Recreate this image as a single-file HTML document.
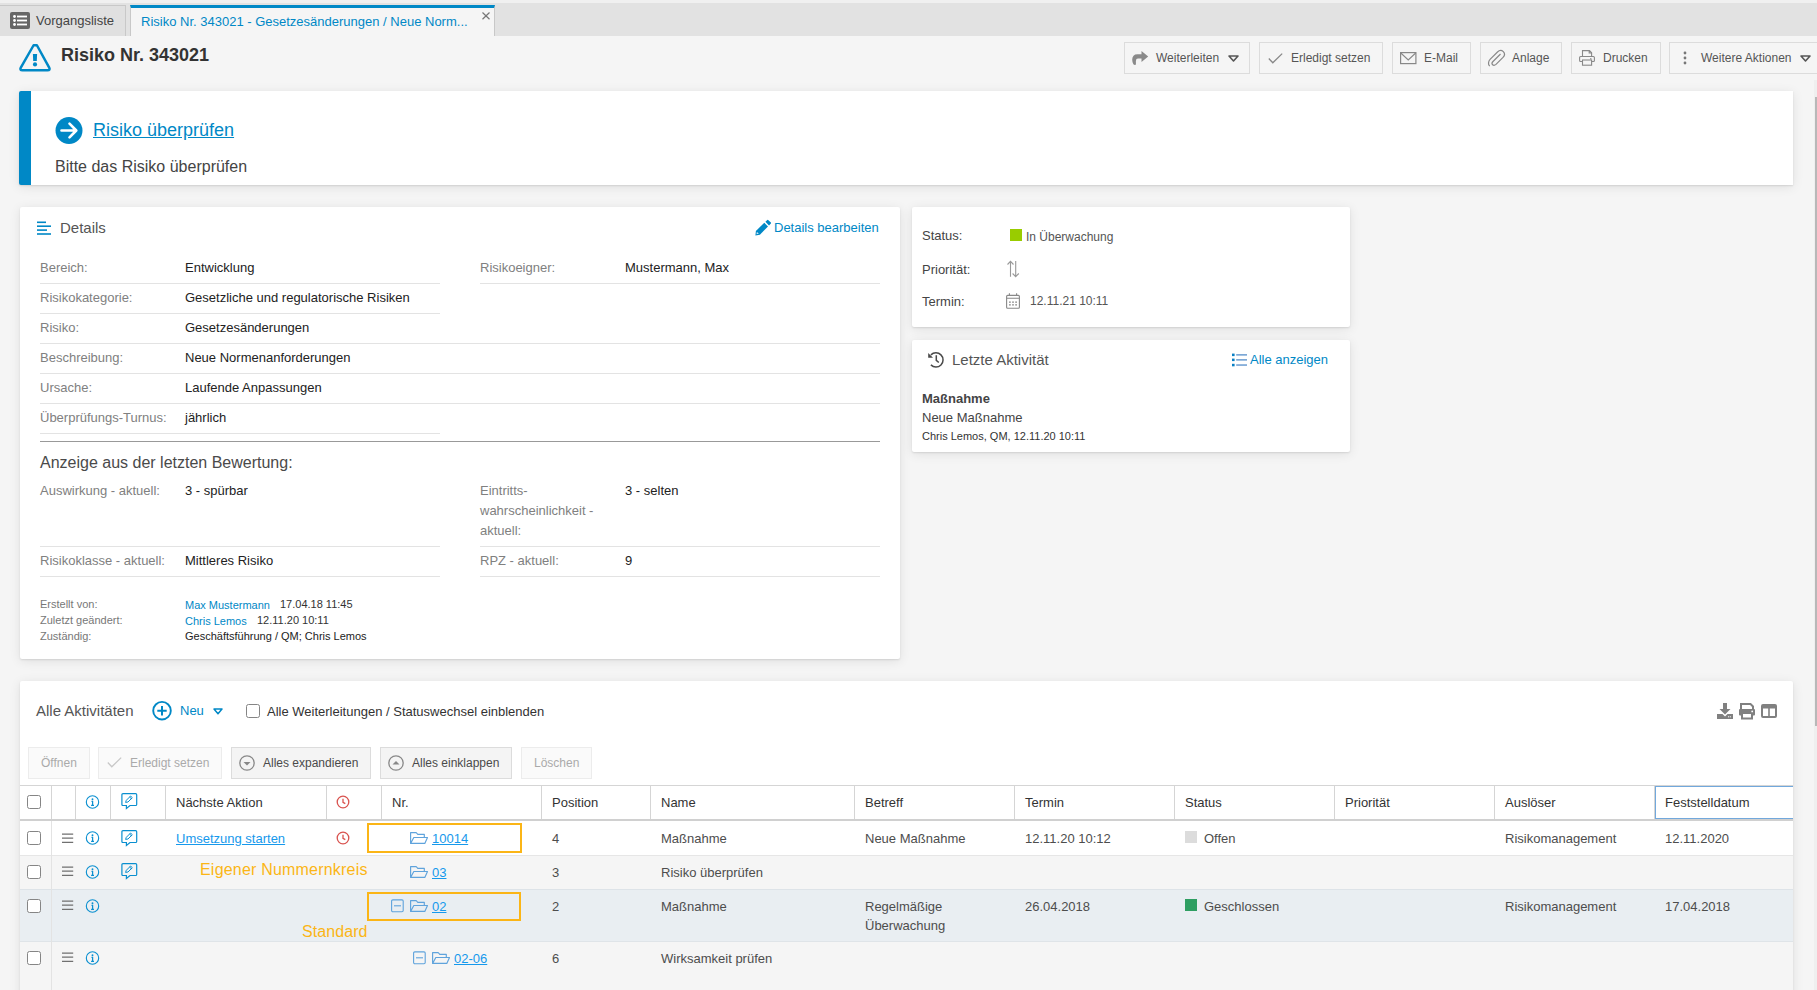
<!DOCTYPE html>
<html><head><meta charset="utf-8">
<style>
*{box-sizing:border-box;margin:0;padding:0}
html,body{width:1817px;height:990px;overflow:hidden;background:#f5f5f5;font-family:"Liberation Sans",sans-serif;color:#333;font-size:13px}
.a{position:absolute}
.t{position:absolute;white-space:nowrap}
.u{text-decoration:underline}
svg{overflow:visible}
</style></head><body>

<div class="a" style="left:0px;top:0px;width:1817px;height:3px;background:#f0f0f0"></div>
<div class="a" style="left:0px;top:3px;width:1817px;height:33px;background:#e2e2e2"></div>
<div class="a" style="left:0px;top:5px;width:126px;height:31px;background:#e0e0e0;border-top:1px solid #c8c8c8;border-right:1px solid #c8c8c8"></div>
<div class="a" style="left:130px;top:5px;width:365px;height:31px;background:#f5f5f5;border-top:3px solid #0088c6;border-left:1px solid #c8c8c8;border-right:1px solid #c8c8c8"></div>
<svg class="a" style="left:10px;top:12px;" width="20" height="17" viewBox="0 0 20 17"><rect x="0" y="0" width="20" height="17" rx="2" fill="#666"/><circle cx="4.5" cy="4.5" r="1.4" fill="#fff"/><circle cx="4.5" cy="8.5" r="1.4" fill="#fff"/><circle cx="4.5" cy="12.5" r="1.4" fill="#fff"/><rect x="7" y="3.6" width="10" height="1.8" fill="#fff"/><rect x="7" y="7.6" width="10" height="1.8" fill="#fff"/><rect x="7" y="11.6" width="10" height="1.8" fill="#fff"/></svg>
<div class="t " style="left:36px;top:14px;font-size:13px;line-height:13px;color:#444;">Vorgangsliste</div>
<div class="t " style="left:141px;top:15px;font-size:13px;line-height:13px;color:#0088c6;">Risiko Nr. 343021 - Gesetzesänderungen / Neue Norm...</div>
<svg class="a" style="left:482px;top:12px;" width="8" height="8" viewBox="0 0 8 8"><path d="M0.5 0.5L7.5 7.2M7.5 0.5L0.5 7.2" stroke="#777" stroke-width="1.2"/></svg>
<svg class="a" style="left:19px;top:43px;" width="33" height="30" viewBox="0 0 33 30"><path d="M14.6 2.25 H17.9 L30.2 24.6 Q31.5 27.35 28.6 27.35 H3.4 Q0.5 27.35 1.8 24.6 Z" fill="none" stroke="#0088c6" stroke-width="2.5" stroke-linejoin="round"/><path d="M13.9 11 H18.1 L17.8 18.1 H14.2 Z" fill="#0088c6"/><circle cx="16" cy="21.4" r="2.1" fill="#0088c6"/></svg>
<div class="t " style="left:61px;top:46px;font-size:18px;line-height:18px;color:#333;font-weight:bold;">Risiko Nr. 343021</div>
<div class="a" style="left:1124px;top:42px;width:126px;height:32px;border:1px solid #dcdcdc;background:#f5f5f5"></div>
<div class="t " style="left:1156px;top:52px;font-size:12px;line-height:12px;color:#555;">Weiterleiten</div>

<svg class="a" style="left:1131px;top:51px;" width="18" height="15" viewBox="0 0 18 15"><path d="M10.5 0 L17.2 5.4 L10.5 10.9 V7.6 H7 Q4.9 7.6 4.9 10 V13.2 Q4.9 14 4 14 Q3 14 2.4 13.2 Q1.2 11.5 1.2 8.8 Q1.2 3.2 6.5 3.2 H10.5 Z" fill="#8a8a8a"/></svg>
<svg class="a" style="left:1228px;top:55px;" width="11" height="7" viewBox="0 0 11 7"><path d="M1 1 L10 1 L5.5 6 Z" fill="none" stroke="#555" stroke-width="1.6" stroke-linejoin="round"/></svg>
<div class="a" style="left:1259px;top:42px;width:124px;height:32px;border:1px solid #dcdcdc;background:#f5f5f5"></div>
<div class="t " style="left:1291px;top:52px;font-size:12px;line-height:12px;color:#555;">Erledigt setzen</div>

<svg class="a" style="left:1268px;top:53px;" width="15" height="11" viewBox="0 0 15 11"><path d="M0.8 5.5 L4.8 9.8 L14.2 0.6" fill="none" stroke="#888" stroke-width="1.3"/></svg>
<div class="a" style="left:1392px;top:42px;width:79px;height:32px;border:1px solid #dcdcdc;background:#f5f5f5"></div>
<div class="t " style="left:1424px;top:52px;font-size:12px;line-height:12px;color:#555;">E-Mail</div>

<svg class="a" style="left:1400px;top:52px;" width="17" height="12" viewBox="0 0 17 12"><rect x="0.6" y="0.6" width="15.3" height="11" fill="none" stroke="#888" stroke-width="1.2"/><path d="M0.8 1 L8.25 8 L15.7 1" fill="none" stroke="#888" stroke-width="1.1"/></svg>
<div class="a" style="left:1480px;top:42px;width:82px;height:32px;border:1px solid #dcdcdc;background:#f5f5f5"></div>
<div class="t " style="left:1512px;top:52px;font-size:12px;line-height:12px;color:#555;">Anlage</div>

<svg class="a" style="left:1488px;top:50px;" width="17" height="17" viewBox="0 0 17 17"><path d="M12.5 4.5 L5 12 C3.8 13.2 3.8 14.5 4.6 15.3 C5.5 16.1 6.8 16 8 14.9 L15 7.9 C16.8 6 16.8 3.6 15.3 2.1 C13.7 0.6 11.3 0.7 9.5 2.5 L2.3 9.7 C0 12 0 15 1.7 16.6" fill="none" stroke="#888" stroke-width="1.2" transform="translate(0,-0.5)"/></svg>
<div class="a" style="left:1571px;top:42px;width:90px;height:32px;border:1px solid #dcdcdc;background:#f5f5f5"></div>
<div class="t " style="left:1603px;top:52px;font-size:12px;line-height:12px;color:#555;">Drucken</div>

<svg class="a" style="left:1579px;top:50px;" width="16" height="16" viewBox="0 0 16 16"><path d="M3.5 6.5 V0.6 H10.5 L12.6 2.7 V6.5 M10.2 0.6 V3 H12.6" fill="none" stroke="#888" stroke-width="1.1"/><rect x="0.6" y="6.5" width="14.8" height="5" rx="1" fill="none" stroke="#888" stroke-width="1.1"/><rect x="3.5" y="10" width="9.1" height="5.2" fill="#f5f5f5" stroke="#888" stroke-width="1.1"/><circle cx="11.8" cy="8.8" r="0.7" fill="#888"/></svg>
<div class="a" style="left:1669px;top:42px;width:160px;height:32px;border:1px solid #dcdcdc;background:#f5f5f5"></div>
<div class="t " style="left:1701px;top:52px;font-size:12px;line-height:12px;color:#555;">Weitere Aktionen</div>

<svg class="a" style="left:1683px;top:51px;" width="4" height="14" viewBox="0 0 4 14"><circle cx="2" cy="2" r="1.4" fill="#777"/><circle cx="2" cy="7" r="1.4" fill="#777"/><circle cx="2" cy="12" r="1.4" fill="#777"/></svg>
<svg class="a" style="left:1800px;top:55px;" width="11" height="7" viewBox="0 0 11 7"><path d="M1 1 L10 1 L5.5 6 Z" fill="none" stroke="#555" stroke-width="1.6" stroke-linejoin="round"/></svg>
<div class="a" style="left:19px;top:91px;width:1774px;height:94px;background:#fff;box-shadow:0 1px 2px rgba(0,0,0,.10),0 2px 12px rgba(0,0,0,.09);border-left:12px solid #0088c6;border-radius:2px 0 0 2px"></div>
<svg class="a" style="left:55px;top:116px;" width="28" height="28" viewBox="0 0 28 28"><circle cx="14" cy="14.5" r="13.5" fill="#0088c6"/><path d="M6.5 14.5 H21 M14.5 7.7 L21.3 14.5 L14.5 21.3" fill="none" stroke="#fff" stroke-width="2.6" stroke-linecap="round" stroke-linejoin="round"/></svg>
<div class="t " style="left:93px;top:121px;font-size:18px;line-height:18px;color:#0088c6;text-decoration:underline;text-underline-offset:1px">Risiko überprüfen</div>
<div class="t " style="left:55px;top:159px;font-size:16px;line-height:16px;color:#444;">Bitte das Risiko überprüfen</div>
<div class="a" style="left:20px;top:207px;width:880px;height:452px;background:#fff;box-shadow:0 1px 2px rgba(0,0,0,.10),0 2px 12px rgba(0,0,0,.09);border-radius:2px"></div>
<div class="a" style="left:912px;top:207px;width:438px;height:120px;background:#fff;box-shadow:0 1px 2px rgba(0,0,0,.10),0 2px 12px rgba(0,0,0,.09);border-radius:2px"></div>
<div class="a" style="left:912px;top:340px;width:438px;height:112px;background:#fff;box-shadow:0 1px 2px rgba(0,0,0,.10),0 2px 12px rgba(0,0,0,.09);border-radius:2px"></div>
<div class="a" style="left:20px;top:681px;width:1773px;height:330px;background:#fff;box-shadow:0 1px 2px rgba(0,0,0,.10),0 2px 12px rgba(0,0,0,.09);border-radius:2px"></div>
<svg class="a" style="left:37px;top:221px;" width="15" height="14" viewBox="0 0 15 14"><rect x="0" y="0.5" width="9" height="1.6" fill="#0088c6"/><rect x="0" y="4.4" width="14" height="1.6" fill="#0088c6"/><rect x="0" y="8.3" width="10" height="1.6" fill="#0088c6"/><rect x="0" y="12.2" width="14" height="1.6" fill="#0088c6"/></svg>
<div class="t " style="left:60px;top:220px;font-size:15px;line-height:15px;color:#555;">Details</div>
<svg class="a" style="left:755px;top:219px;" width="17" height="17" viewBox="0 0 17 17"><path d="M0.4 16.6 L0.9 12 L9.3 3.8 L13 7.4 L4.9 15.8 Z" fill="#0088c6"/><path d="M10.4 2.8 L12.3 0.9 Q12.7 0.5 13.1 0.9 L15.9 3.6 Q16.3 4 15.9 4.4 L14 6.4 Z" fill="#0088c6"/><path d="M1.9 12.9 L3.9 14.6 L1.5 15.3 Z" fill="#fff" opacity="0.85"/></svg>
<div class="t " style="left:774px;top:221px;font-size:13px;line-height:13px;color:#0088c6;">Details bearbeiten</div>
<div class="t " style="left:40px;top:261px;font-size:13px;line-height:13px;color:#808080;">Bereich:</div>
<div class="t " style="left:185px;top:261px;font-size:13px;line-height:13px;color:#222;">Entwicklung</div>
<div class="a" style="left:40px;top:283px;width:400px;height:1px;background:#e3e3e3"></div>
<div class="t " style="left:40px;top:291px;font-size:13px;line-height:13px;color:#808080;">Risikokategorie:</div>
<div class="t " style="left:185px;top:291px;font-size:13px;line-height:13px;color:#222;">Gesetzliche und regulatorische Risiken</div>
<div class="a" style="left:40px;top:313px;width:400px;height:1px;background:#e3e3e3"></div>
<div class="t " style="left:40px;top:321px;font-size:13px;line-height:13px;color:#808080;">Risiko:</div>
<div class="t " style="left:185px;top:321px;font-size:13px;line-height:13px;color:#222;">Gesetzesänderungen</div>
<div class="a" style="left:40px;top:343px;width:400px;height:1px;background:#e3e3e3"></div>
<div class="t " style="left:40px;top:351px;font-size:13px;line-height:13px;color:#808080;">Beschreibung:</div>
<div class="t " style="left:185px;top:351px;font-size:13px;line-height:13px;color:#222;">Neue Normenanforderungen</div>
<div class="a" style="left:40px;top:373px;width:400px;height:1px;background:#e3e3e3"></div>
<div class="t " style="left:40px;top:381px;font-size:13px;line-height:13px;color:#808080;">Ursache:</div>
<div class="t " style="left:185px;top:381px;font-size:13px;line-height:13px;color:#222;">Laufende Anpassungen</div>
<div class="a" style="left:40px;top:403px;width:400px;height:1px;background:#e3e3e3"></div>
<div class="t " style="left:40px;top:411px;font-size:13px;line-height:13px;color:#808080;">Überprüfungs-Turnus:</div>
<div class="t " style="left:185px;top:411px;font-size:13px;line-height:13px;color:#222;">jährlich</div>
<div class="a" style="left:40px;top:433px;width:400px;height:1px;background:#e3e3e3"></div>
<div class="t " style="left:480px;top:261px;font-size:13px;line-height:13px;color:#808080;">Risikoeigner:</div>
<div class="t " style="left:625px;top:261px;font-size:13px;line-height:13px;color:#222;">Mustermann, Max</div>
<div class="a" style="left:480px;top:283px;width:400px;height:1px;background:#e3e3e3"></div>
<div class="a" style="left:440px;top:343px;width:40px;height:1px;background:#e3e3e3"></div>
<div class="a" style="left:480px;top:343px;width:400px;height:1px;background:#e3e3e3"></div>
<div class="a" style="left:440px;top:373px;width:40px;height:1px;background:#e3e3e3"></div>
<div class="a" style="left:480px;top:373px;width:400px;height:1px;background:#e3e3e3"></div>
<div class="a" style="left:440px;top:403px;width:40px;height:1px;background:#e3e3e3"></div>
<div class="a" style="left:480px;top:403px;width:400px;height:1px;background:#e3e3e3"></div>
<div class="a" style="left:40px;top:441px;width:840px;height:1px;background:#999"></div>
<div class="t " style="left:40px;top:455px;font-size:16px;line-height:16px;color:#4a4a4a;">Anzeige aus der letzten Bewertung:</div>
<div class="t " style="left:40px;top:484px;font-size:13px;line-height:13px;color:#808080;">Auswirkung - aktuell:</div>
<div class="t " style="left:185px;top:484px;font-size:13px;line-height:13px;color:#222;">3 - spürbar</div>
<div class="t " style="left:480px;top:484px;font-size:13px;line-height:13px;color:#808080;">Eintritts-</div>
<div class="t " style="left:480px;top:504px;font-size:13px;line-height:13px;color:#808080;">wahrscheinlichkeit -</div>
<div class="t " style="left:480px;top:524px;font-size:13px;line-height:13px;color:#808080;">aktuell:</div>
<div class="t " style="left:625px;top:484px;font-size:13px;line-height:13px;color:#222;">3 - selten</div>
<div class="a" style="left:40px;top:546px;width:400px;height:1px;background:#e3e3e3"></div>
<div class="a" style="left:480px;top:546px;width:400px;height:1px;background:#e3e3e3"></div>
<div class="t " style="left:40px;top:554px;font-size:13px;line-height:13px;color:#808080;">Risikoklasse - aktuell:</div>
<div class="t " style="left:185px;top:554px;font-size:13px;line-height:13px;color:#222;">Mittleres Risiko</div>
<div class="t " style="left:480px;top:554px;font-size:13px;line-height:13px;color:#808080;">RPZ - aktuell:</div>
<div class="t " style="left:625px;top:554px;font-size:13px;line-height:13px;color:#222;">9</div>
<div class="a" style="left:40px;top:576px;width:400px;height:1px;background:#e3e3e3"></div>
<div class="a" style="left:480px;top:576px;width:400px;height:1px;background:#e3e3e3"></div>
<div class="t " style="left:40px;top:599px;font-size:11px;line-height:11px;color:#777;">Erstellt von:</div>
<div class="t " style="left:185px;top:600px;font-size:11px;line-height:11px;color:#0088c6;">Max Mustermann</div>
<div class="t " style="left:280px;top:599px;font-size:11px;line-height:11px;color:#333;">17.04.18 11:45</div>
<div class="t " style="left:40px;top:615px;font-size:11px;line-height:11px;color:#777;">Zuletzt geändert:</div>
<div class="t " style="left:185px;top:616px;font-size:11px;line-height:11px;color:#0088c6;">Chris Lemos</div>
<div class="t " style="left:257px;top:615px;font-size:11px;line-height:11px;color:#333;">12.11.20 10:11</div>
<div class="t " style="left:40px;top:631px;font-size:11px;line-height:11px;color:#777;">Zuständig:</div>
<div class="t " style="left:185px;top:631px;font-size:11px;line-height:11px;color:#222;">Geschäftsführung / QM; Chris Lemos</div>
<div class="t " style="left:922px;top:229px;font-size:13px;line-height:13px;color:#444;">Status:</div>
<div class="a" style="left:1010px;top:229px;width:12px;height:12px;background:#99cc00"></div>
<div class="t " style="left:1026px;top:231px;font-size:12px;line-height:12px;color:#555;">In Überwachung</div>
<div class="t " style="left:922px;top:263px;font-size:13px;line-height:13px;color:#444;">Priorität:</div>
<svg class="a" style="left:1006px;top:260px;" width="14" height="18" viewBox="0 0 14 18"><path d="M4.5 16.8 V1.3 M1.5 4.5 L4.5 1.3 L7.5 4.5 M9.7 1 V16.6 M6.6 13.5 L9.7 16.6 L12.8 13.5" fill="none" stroke="#999" stroke-width="1.1"/></svg>
<div class="t " style="left:922px;top:295px;font-size:13px;line-height:13px;color:#444;">Termin:</div>
<svg class="a" style="left:1006px;top:293px;" width="14" height="16" viewBox="0 0 14 16"><rect x="0.6" y="2.4" width="12.8" height="12.9" rx="1" fill="none" stroke="#888" stroke-width="1.1"/><path d="M0.6 5.2 H13.4 M3.4 0.2 V3 M10.6 0.2 V3" stroke="#888" stroke-width="1.1"/><path d="M3 9.2h1.8M6.1 9.2h1.8M9.2 9.2h1.8M3 11.8h1.8M6.1 11.8h1.8M9.2 11.8h1.8" stroke="#888" stroke-width="1.2"/></svg>
<div class="t " style="left:1030px;top:295px;font-size:12px;line-height:12px;color:#555;">12.11.21 10:11</div>
<svg class="a" style="left:927px;top:351px;" width="18" height="18" viewBox="0 0 18 18"><path d="M3.9 3.9 A7.1 7.1 0 1 1 3.9 13.9" fill="none" stroke="#4a4a4a" stroke-width="1.5"/><path d="M1.2 2 L1.2 6.8 L6 6.8 Z" fill="#4a4a4a"/><path d="M9.3 4.3 V9.3 L11.8 11.5" fill="none" stroke="#4a4a4a" stroke-width="1.5"/></svg>
<div class="t " style="left:952px;top:352px;font-size:15px;line-height:15px;color:#555;">Letzte Aktivität</div>
<svg class="a" style="left:1231px;top:352px;" width="17" height="15" viewBox="0 0 17 15"><rect x="1" y="1.6" width="2.6" height="2.5" fill="#0a80c4"/><rect x="1" y="6.6" width="2.6" height="2.5" fill="#0a80c4"/><rect x="1" y="11.8" width="2.6" height="2.5" fill="#0a80c4"/><rect x="5.2" y="2" width="10.8" height="1.7" fill="#7da8d6"/><rect x="5.2" y="7" width="10.8" height="1.7" fill="#7da8d6"/><rect x="5.2" y="12.2" width="10.8" height="1.7" fill="#7da8d6"/></svg>
<div class="t " style="left:1250px;top:353px;font-size:13px;line-height:13px;color:#0088c6;">Alle anzeigen</div>
<div class="t " style="left:922px;top:392px;font-size:13px;line-height:13px;color:#444;font-weight:bold;">Maßnahme</div>
<div class="t " style="left:922px;top:411px;font-size:13px;line-height:13px;color:#444;">Neue Maßnahme</div>
<div class="t " style="left:922px;top:431px;font-size:11px;line-height:11px;color:#333;">Chris Lemos, QM, 12.11.20 10:11</div>
<div class="t " style="left:36px;top:703px;font-size:15px;line-height:15px;color:#555;">Alle Aktivitäten</div>
<svg class="a" style="left:152px;top:701px;" width="20" height="20" viewBox="0 0 20 20"><circle cx="10" cy="9.7" r="8.8" fill="none" stroke="#0088c6" stroke-width="1.9"/><path d="M10 5 V14.5 M5.3 9.7 H14.7" stroke="#0088c6" stroke-width="2"/></svg>
<div class="t " style="left:180px;top:704px;font-size:13px;line-height:13px;color:#0088c6;">Neu</div>
<svg class="a" style="left:213px;top:708px;" width="10" height="7" viewBox="0 0 10 7"><path d="M1 1 L9 1 L5 5.8 Z" fill="none" stroke="#0088c6" stroke-width="1.5" stroke-linejoin="round"/></svg>
<div class="a" style="left:246px;top:704px;width:14px;height:14px;border:1px solid #858585;border-radius:2.5px;background:#fff"></div>
<div class="t " style="left:267px;top:705px;font-size:13px;line-height:13px;color:#333;">Alle Weiterleitungen / Statuswechsel einblenden</div>
<svg class="a" style="left:1717px;top:703px;" width="16" height="16" viewBox="0 0 16 16"><rect x="6" y="0" width="4" height="7" fill="#808080"/><path d="M2.5 6 H13.5 L8 11.5 Z" fill="#808080"/><path d="M0 11 H5.5 L8 13.5 L10.5 11 H16 V16 H0 Z" fill="#808080"/><rect x="11" y="13.3" width="1.1" height="1" fill="#fff"/><rect x="12.8" y="13.3" width="1.1" height="1" fill="#fff"/></svg>
<svg class="a" style="left:1739px;top:703px;" width="16" height="16" viewBox="0 0 16 16"><path d="M2 6 V1 H11.5 L14 3.5 V6" fill="none" stroke="#808080" stroke-width="2"/><rect x="0" y="6" width="16" height="6.5" rx="1" fill="#808080"/><rect x="3" y="10" width="10" height="5.5" fill="#fff" stroke="#808080" stroke-width="2"/><circle cx="13.2" cy="8.4" r="0.9" fill="#fff"/></svg>
<svg class="a" style="left:1761px;top:704px;" width="16" height="14" viewBox="0 0 16 14"><rect x="1" y="1" width="14" height="12" rx="1" fill="none" stroke="#808080" stroke-width="2"/><rect x="1" y="1" width="14" height="3.5" fill="#808080"/><rect x="7.2" y="1" width="1.6" height="12" fill="#808080"/></svg>
<div class="a" style="left:28px;top:747px;width:62px;height:32px;border:1px solid #ececec;background:#fafafa"></div>
<div class="t " style="left:41px;top:757px;font-size:12px;line-height:12px;color:#aaa;">Öffnen</div>
<div class="a" style="left:98px;top:747px;width:124px;height:32px;border:1px solid #ececec;background:#fafafa"></div>
<div class="t " style="left:130px;top:757px;font-size:12px;line-height:12px;color:#aaa;">Erledigt setzen</div>
<svg class="a" style="left:107px;top:757px" width="15" height="11"><path d="M0.8 5.5 L4.8 9.8 L14.2 0.6" fill="none" stroke="#c8c8c8" stroke-width="1.3"/></svg>
<div class="a" style="left:231px;top:747px;width:140px;height:32px;border:1px solid #dcdcdc;background:#f4f4f4"></div>
<div class="t " style="left:263px;top:757px;font-size:12px;line-height:12px;color:#4a4a4a;">Alles expandieren</div>
<svg class="a" style="left:239px;top:755px" width="16" height="16"><circle cx="8" cy="8" r="7.2" fill="none" stroke="#888" stroke-width="1.3"/><path d="M4.5 7 H11.5 L8 10.5 Z" fill="#888"/></svg>
<div class="a" style="left:380px;top:747px;width:132px;height:32px;border:1px solid #dcdcdc;background:#f4f4f4"></div>
<div class="t " style="left:412px;top:757px;font-size:12px;line-height:12px;color:#4a4a4a;">Alles einklappen</div>
<svg class="a" style="left:388px;top:755px" width="16" height="16"><circle cx="8" cy="8" r="7.2" fill="none" stroke="#888" stroke-width="1.3"/><path d="M4.5 9.5 H11.5 L8 6 Z" fill="#888"/></svg>
<div class="a" style="left:521px;top:747px;width:71px;height:32px;border:1px solid #ececec;background:#fafafa"></div>
<div class="t " style="left:534px;top:757px;font-size:12px;line-height:12px;color:#aaa;">Löschen</div>
<div class="a" style="left:20px;top:785px;width:1773px;height:1px;background:#d5d5d5"></div>
<div class="a" style="left:20px;top:819px;width:1773px;height:2px;background:#d0d0d0"></div>
<div class="a" style="left:51px;top:786px;width:1px;height:33px;background:#d5d5d5"></div>
<div class="a" style="left:75px;top:786px;width:1px;height:33px;background:#d5d5d5"></div>
<div class="a" style="left:110px;top:786px;width:1px;height:33px;background:#d5d5d5"></div>
<div class="a" style="left:165px;top:786px;width:1px;height:33px;background:#d5d5d5"></div>
<div class="a" style="left:326px;top:786px;width:1px;height:33px;background:#d5d5d5"></div>
<div class="a" style="left:381px;top:786px;width:1px;height:33px;background:#d5d5d5"></div>
<div class="a" style="left:541px;top:786px;width:1px;height:33px;background:#d5d5d5"></div>
<div class="a" style="left:650px;top:786px;width:1px;height:33px;background:#d5d5d5"></div>
<div class="a" style="left:854px;top:786px;width:1px;height:33px;background:#d5d5d5"></div>
<div class="a" style="left:1014px;top:786px;width:1px;height:33px;background:#d5d5d5"></div>
<div class="a" style="left:1174px;top:786px;width:1px;height:33px;background:#d5d5d5"></div>
<div class="a" style="left:1334px;top:786px;width:1px;height:33px;background:#d5d5d5"></div>
<div class="a" style="left:1494px;top:786px;width:1px;height:33px;background:#d5d5d5"></div>
<div class="a" style="left:1654px;top:786px;width:1px;height:33px;background:#d5d5d5"></div>
<div class="a" style="left:1655px;top:786px;width:138px;height:33px;border:1px solid #72a8dc;border-right:none"></div>
<div class="a" style="left:27px;top:795px;width:14px;height:14px;border:1px solid #858585;border-radius:2.5px;background:#fff"></div>
<svg class="a" style="left:84px;top:794px" width="16" height="16"><circle cx="8.5" cy="8" r="6.2" fill="none" stroke="#0a8fd0" stroke-width="1.1"/><circle cx="8.5" cy="5.2" r="0.95" fill="#0a8fd0"/><path d="M7.5 7.3 H8.6 V11.2 M7.1 11.4 H10" fill="none" stroke="#0a8fd0" stroke-width="1.25"/></svg>
<svg class="a" style="left:121px;top:793px" width="17" height="17"><path d="M2 0.7 H14.6 Q15.7 0.7 15.7 1.8 V11.4 Q15.7 12.5 14.6 12.5 H9 L5.4 15.5 V12.5 H2 Q0.9 12.5 0.9 11.4 V1.8 Q0.9 0.7 2 0.7 Z" fill="none" stroke="#0a8fd0" stroke-width="1.2"/><path d="M4.6 9.4 L5.3 7.3 L9.6 3 L11.3 4.7 L7 9 Z M8.6 4 L10.3 5.7" fill="none" stroke="#0a8fd0" stroke-width="1" stroke-linejoin="round"/></svg>
<div class="t " style="left:176px;top:796px;font-size:13px;line-height:13px;color:#333;">Nächste Aktion</div>
<svg class="a" style="left:336px;top:795px" width="14" height="14"><circle cx="7" cy="7" r="5.8" fill="none" stroke="#d9534f" stroke-width="1.3"/><path d="M7 3.8 V7.3 L9.3 8.6" fill="none" stroke="#d9534f" stroke-width="1.3"/></svg>
<div class="t " style="left:392px;top:796px;font-size:13px;line-height:13px;color:#333;">Nr.</div>
<div class="t " style="left:552px;top:796px;font-size:13px;line-height:13px;color:#333;">Position</div>
<div class="t " style="left:661px;top:796px;font-size:13px;line-height:13px;color:#333;">Name</div>
<div class="t " style="left:865px;top:796px;font-size:13px;line-height:13px;color:#333;">Betreff</div>
<div class="t " style="left:1025px;top:796px;font-size:13px;line-height:13px;color:#333;">Termin</div>
<div class="t " style="left:1185px;top:796px;font-size:13px;line-height:13px;color:#333;">Status</div>
<div class="t " style="left:1345px;top:796px;font-size:13px;line-height:13px;color:#333;">Priorität</div>
<div class="t " style="left:1505px;top:796px;font-size:13px;line-height:13px;color:#333;">Auslöser</div>
<div class="t " style="left:1665px;top:796px;font-size:13px;line-height:13px;color:#333;">Feststelldatum</div>
<div class="a" style="left:20px;top:821px;width:1773px;height:34px;background:#fff"></div>
<div class="a" style="left:20px;top:855px;width:1773px;height:1px;background:#e6e6e6"></div>
<div class="a" style="left:20px;top:856px;width:1773px;height:33px;background:#f5f5f5"></div>
<div class="a" style="left:20px;top:889px;width:1773px;height:1px;background:#dde3e8"></div>
<div class="a" style="left:20px;top:890px;width:1773px;height:51px;background:#e9eef2"></div>
<div class="a" style="left:20px;top:941px;width:1773px;height:1px;background:#dfe4e8"></div>
<div class="a" style="left:20px;top:942px;width:1773px;height:60px;background:#f5f5f5"></div>
<div class="a" style="left:51px;top:821px;width:1px;height:170px;background:#e3e3e3"></div>
<div class="a" style="left:27px;top:831px;width:14px;height:14px;border:1px solid #858585;border-radius:2.5px;background:#fff"></div>
<svg class="a" style="left:62px;top:833px" width="12" height="12"><path d="M0 1.2 H11.2 M0 5.2 H11.2 M0 9.3 H11.2" stroke="#707070" stroke-width="1.3"/></svg>
<svg class="a" style="left:84px;top:830px" width="16" height="16"><circle cx="8.5" cy="8" r="6.2" fill="none" stroke="#0a8fd0" stroke-width="1.1"/><circle cx="8.5" cy="5.2" r="0.95" fill="#0a8fd0"/><path d="M7.5 7.3 H8.6 V11.2 M7.1 11.4 H10" fill="none" stroke="#0a8fd0" stroke-width="1.25"/></svg>
<svg class="a" style="left:121px;top:830px" width="17" height="17"><path d="M2 0.7 H14.6 Q15.7 0.7 15.7 1.8 V11.4 Q15.7 12.5 14.6 12.5 H9 L5.4 15.5 V12.5 H2 Q0.9 12.5 0.9 11.4 V1.8 Q0.9 0.7 2 0.7 Z" fill="none" stroke="#0a8fd0" stroke-width="1.2"/><path d="M4.6 9.4 L5.3 7.3 L9.6 3 L11.3 4.7 L7 9 Z M8.6 4 L10.3 5.7" fill="none" stroke="#0a8fd0" stroke-width="1" stroke-linejoin="round"/></svg>
<div class="t " style="left:176px;top:832px;font-size:13px;line-height:13px;color:#1699ec;text-decoration:underline">Umsetzung starten</div>
<svg class="a" style="left:336px;top:831px" width="14" height="14"><circle cx="7" cy="7" r="5.8" fill="none" stroke="#d9534f" stroke-width="1.3"/><path d="M7 3.8 V7.3 L9.3 8.6" fill="none" stroke="#d9534f" stroke-width="1.3"/></svg>
<svg class="a" style="left:409px;top:831px" width="20" height="14"><path d="M1.6 12.4 V1.6 H7.2 L8.8 3.3 H15.3 V6.3 M1.6 12.4 L4.8 6.5 H18.5 L15.8 12.4 Z" fill="none" stroke="#5fa3dc" stroke-width="1.15" stroke-linejoin="round"/></svg>
<div class="t " style="left:432px;top:832px;font-size:13px;line-height:13px;color:#1699ec;text-decoration:underline">10014</div>
<div class="t " style="left:552px;top:832px;font-size:13px;line-height:13px;color:#4d4d4d;">4</div>
<div class="t " style="left:661px;top:832px;font-size:13px;line-height:13px;color:#4d4d4d;">Maßnahme</div>
<div class="t " style="left:865px;top:832px;font-size:13px;line-height:13px;color:#4d4d4d;">Neue Maßnahme</div>
<div class="t " style="left:1025px;top:832px;font-size:13px;line-height:13px;color:#4d4d4d;">12.11.20 10:12</div>
<div class="a" style="left:1185px;top:831px;width:12px;height:12px;background:#dcdcdc"></div>
<div class="t " style="left:1204px;top:832px;font-size:13px;line-height:13px;color:#4d4d4d;">Offen</div>
<div class="t " style="left:1505px;top:832px;font-size:13px;line-height:13px;color:#4d4d4d;">Risikomanagement</div>
<div class="t " style="left:1665px;top:832px;font-size:13px;line-height:13px;color:#4d4d4d;">12.11.2020</div>
<div class="a" style="left:27px;top:865px;width:14px;height:14px;border:1px solid #858585;border-radius:2.5px;background:#fff"></div>
<svg class="a" style="left:62px;top:866px" width="12" height="12"><path d="M0 1.2 H11.2 M0 5.2 H11.2 M0 9.3 H11.2" stroke="#707070" stroke-width="1.3"/></svg>
<svg class="a" style="left:84px;top:864px" width="16" height="16"><circle cx="8.5" cy="8" r="6.2" fill="none" stroke="#0a8fd0" stroke-width="1.1"/><circle cx="8.5" cy="5.2" r="0.95" fill="#0a8fd0"/><path d="M7.5 7.3 H8.6 V11.2 M7.1 11.4 H10" fill="none" stroke="#0a8fd0" stroke-width="1.25"/></svg>
<svg class="a" style="left:121px;top:863px" width="17" height="17"><path d="M2 0.7 H14.6 Q15.7 0.7 15.7 1.8 V11.4 Q15.7 12.5 14.6 12.5 H9 L5.4 15.5 V12.5 H2 Q0.9 12.5 0.9 11.4 V1.8 Q0.9 0.7 2 0.7 Z" fill="none" stroke="#0a8fd0" stroke-width="1.2"/><path d="M4.6 9.4 L5.3 7.3 L9.6 3 L11.3 4.7 L7 9 Z M8.6 4 L10.3 5.7" fill="none" stroke="#0a8fd0" stroke-width="1" stroke-linejoin="round"/></svg>
<svg class="a" style="left:409px;top:865px" width="20" height="14"><path d="M1.6 12.4 V1.6 H7.2 L8.8 3.3 H15.3 V6.3 M1.6 12.4 L4.8 6.5 H18.5 L15.8 12.4 Z" fill="none" stroke="#5fa3dc" stroke-width="1.15" stroke-linejoin="round"/></svg>
<div class="t " style="left:432px;top:866px;font-size:13px;line-height:13px;color:#1699ec;text-decoration:underline">03</div>
<div class="t " style="left:552px;top:866px;font-size:13px;line-height:13px;color:#4d4d4d;">3</div>
<div class="t " style="left:661px;top:866px;font-size:13px;line-height:13px;color:#4d4d4d;">Risiko überprüfen</div>
<div class="a" style="left:27px;top:899px;width:14px;height:14px;border:1px solid #858585;border-radius:2.5px;background:#fff"></div>
<svg class="a" style="left:62px;top:900px" width="12" height="12"><path d="M0 1.2 H11.2 M0 5.2 H11.2 M0 9.3 H11.2" stroke="#707070" stroke-width="1.3"/></svg>
<svg class="a" style="left:84px;top:898px" width="16" height="16"><circle cx="8.5" cy="8" r="6.2" fill="none" stroke="#0a8fd0" stroke-width="1.1"/><circle cx="8.5" cy="5.2" r="0.95" fill="#0a8fd0"/><path d="M7.5 7.3 H8.6 V11.2 M7.1 11.4 H10" fill="none" stroke="#0a8fd0" stroke-width="1.25"/></svg>
<svg class="a" style="left:390px;top:899px" width="14" height="14"><rect x="1.6" y="0.9" width="11.6" height="11.8" rx="1.2" fill="none" stroke="#5fa3dc" stroke-width="1.1"/><path d="M4 6.8 H11" stroke="#5fa3dc" stroke-width="1.1"/></svg>
<svg class="a" style="left:409px;top:899px" width="20" height="14"><path d="M1.6 12.4 V1.6 H7.2 L8.8 3.3 H15.3 V6.3 M1.6 12.4 L4.8 6.5 H18.5 L15.8 12.4 Z" fill="none" stroke="#5fa3dc" stroke-width="1.15" stroke-linejoin="round"/></svg>
<div class="t " style="left:432px;top:900px;font-size:13px;line-height:13px;color:#1699ec;text-decoration:underline">02</div>
<div class="t " style="left:552px;top:900px;font-size:13px;line-height:13px;color:#4d4d4d;">2</div>
<div class="t " style="left:661px;top:900px;font-size:13px;line-height:13px;color:#4d4d4d;">Maßnahme</div>
<div class="t " style="left:865px;top:900px;font-size:13px;line-height:13px;color:#4d4d4d;">Regelmäßige</div>
<div class="t " style="left:865px;top:919px;font-size:13px;line-height:13px;color:#4d4d4d;">Überwachung</div>
<div class="t " style="left:1025px;top:900px;font-size:13px;line-height:13px;color:#4d4d4d;">26.04.2018</div>
<div class="a" style="left:1185px;top:899px;width:12px;height:12px;background:#2e9e62"></div>
<div class="t " style="left:1204px;top:900px;font-size:13px;line-height:13px;color:#4d4d4d;">Geschlossen</div>
<div class="t " style="left:1505px;top:900px;font-size:13px;line-height:13px;color:#4d4d4d;">Risikomanagement</div>
<div class="t " style="left:1665px;top:900px;font-size:13px;line-height:13px;color:#4d4d4d;">17.04.2018</div>
<div class="a" style="left:27px;top:951px;width:14px;height:14px;border:1px solid #858585;border-radius:2.5px;background:#fff"></div>
<svg class="a" style="left:62px;top:952px" width="12" height="12"><path d="M0 1.2 H11.2 M0 5.2 H11.2 M0 9.3 H11.2" stroke="#707070" stroke-width="1.3"/></svg>
<svg class="a" style="left:84px;top:950px" width="16" height="16"><circle cx="8.5" cy="8" r="6.2" fill="none" stroke="#0a8fd0" stroke-width="1.1"/><circle cx="8.5" cy="5.2" r="0.95" fill="#0a8fd0"/><path d="M7.5 7.3 H8.6 V11.2 M7.1 11.4 H10" fill="none" stroke="#0a8fd0" stroke-width="1.25"/></svg>
<svg class="a" style="left:412px;top:951px" width="14" height="14"><rect x="1.6" y="0.9" width="11.6" height="11.8" rx="1.2" fill="none" stroke="#5fa3dc" stroke-width="1.1"/><path d="M4 6.8 H11" stroke="#5fa3dc" stroke-width="1.1"/></svg>
<svg class="a" style="left:431px;top:951px" width="20" height="14"><path d="M1.6 12.4 V1.6 H7.2 L8.8 3.3 H15.3 V6.3 M1.6 12.4 L4.8 6.5 H18.5 L15.8 12.4 Z" fill="none" stroke="#5fa3dc" stroke-width="1.15" stroke-linejoin="round"/></svg>
<div class="t " style="left:454px;top:952px;font-size:13px;line-height:13px;color:#1699ec;text-decoration:underline">02-06</div>
<div class="t " style="left:552px;top:952px;font-size:13px;line-height:13px;color:#4d4d4d;">6</div>
<div class="t " style="left:661px;top:952px;font-size:13px;line-height:13px;color:#4d4d4d;">Wirksamkeit prüfen</div>
<div class="a" style="left:367px;top:823px;width:155px;height:30px;border:2px solid #fbb516"></div>
<div class="a" style="left:367px;top:892px;width:154px;height:29px;border:2px solid #fbb516"></div>
<div class="t " style="left:200px;top:862px;font-size:16px;line-height:16px;color:#fbb516;letter-spacing:0.2px">Eigener Nummernkreis</div>
<div class="t " style="left:302px;top:924px;font-size:16px;line-height:16px;color:#fbb516;letter-spacing:0.08px">Standard</div>
<div class="a" style="left:1814px;top:80px;width:3px;height:910px;background:#efefef"></div>
<div class="a" style="left:1815px;top:97px;width:2px;height:629px;background:#b8b8b8"></div>
</body></html>
